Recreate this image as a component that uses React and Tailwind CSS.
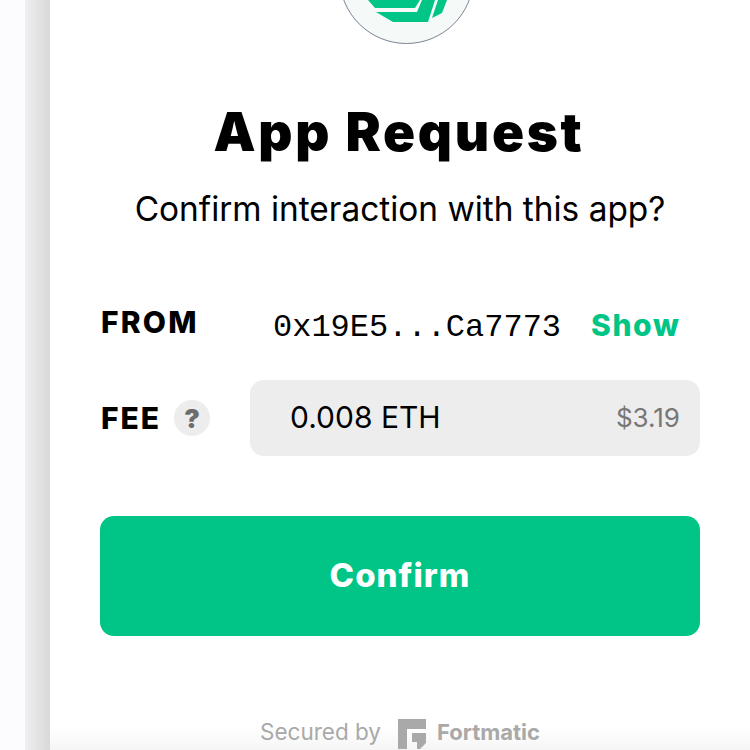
export default function App() {
  return (
    <div className="w-[750px] h-[750px] overflow-hidden flex bg-[#fcfcff] font-['Inter',sans-serif] text-black">
      <div className="w-[25px] shrink-0" />
      <div className="w-[25px] shrink-0 bg-gradient-to-r from-[#efefef] to-[#d9d9d9]" />
      <div className="relative w-[700px] shrink-0 h-[750px] bg-gradient-to-b from-white from-[97%] to-[#f5f5f5] pt-[99px]">
        <div className="absolute left-[289px] top-[-91px] w-[135px] h-[135px] rounded-full bg-[#f5f9f8] border border-[#7d8296] overflow-hidden">
          <svg className="absolute left-0 top-0" width="135" height="135" viewBox="0 0 135 135">
            <path d="M28 90 L35 98 H75 L80 90 Z" fill="#00c586" />
            <path d="M36 102 L53 112 H88 L95 90 H82 L77 102 Z" fill="#00c586" />
            <path d="M98 90 L92 108 L102 103 L107 90 Z" fill="#00c586" />
          </svg>
        </div>
        <h1 className="text-[53px] leading-[66px] font-black tracking-[2.7px] text-center pr-[2px]">App Request</h1>
        <p className="mt-[22px] text-[33.4px] leading-[44px] text-center font-normal">Confirm interaction with this app?</p>
        <div className="ml-[50px] w-[600px] mt-[65px]">
          <div className="flex items-center h-[60px]">
            <span className="w-[150px] pl-[1px] text-[30px] font-extrabold tracking-[2.2px] -mt-[8px]">FROM</span>
            <span className="ml-[23px] mt-[3px] font-['Liberation_Mono',monospace] text-[32px] leading-[40px]">0x19E5...Ca7773</span>
            <span className="ml-[30px] text-[30px] font-extrabold tracking-[1.6px] text-[#00c586] -mt-[1px]">Show</span>
          </div>
          <div className="flex items-center mt-[24px]">
            <div className="w-[150px] pl-[1px] flex items-center">
              <span className="text-[30px] font-extrabold tracking-[2px]">FEE</span>
              <span className="ml-[13px] w-[36px] h-[36px] rounded-full bg-[#ededed] flex items-center justify-center text-[26px] font-black text-[#6d6d6d]">?</span>
            </div>
            <div className="w-[450px] h-[76px] rounded-[14px] bg-[#ededed] flex items-center justify-between pl-[40px] pr-[20px]">
              <span className="text-[30px] -mt-[2px]">0.008 ETH</span>
              <span className="text-[26px] text-[#777777] -mt-[2px]">$3.19</span>
            </div>
          </div>
          <button className="mt-[60px] w-[600px] h-[120px] rounded-[14px] bg-[#00c586] text-white text-[33px] font-extrabold tracking-[1px]">Confirm</button>
        </div>
        <div className="absolute left-0 bottom-0 w-full h-[36px] flex items-center justify-center text-[#a9a9a9]">
          <span className="text-[22.5px]">Secured by</span>
          <svg className="ml-[17px] mt-[4px]" width="28" height="30" viewBox="0 0 28 30">
            <path d="M0 0 H28 V10 H9 V30 H0 Z M14 14 H28 V24 L22 30 H19 V23 H14 Z" fill="#a9a9a9" />
          </svg>
          <span className="ml-[11px] text-[22px] font-bold">Fortmatic</span>
        </div>
      </div>
    </div>
  );
}
